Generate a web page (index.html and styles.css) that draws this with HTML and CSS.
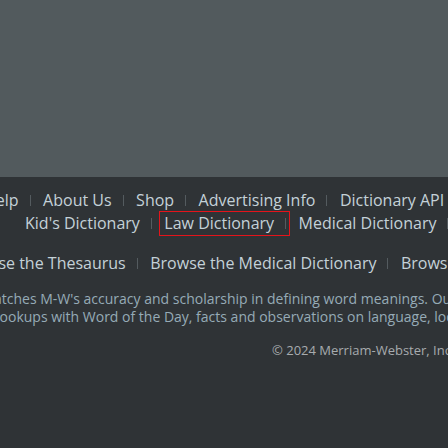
FILE: index.html
```html
<!DOCTYPE html>
<html lang="en">
<head>
<meta charset="utf-8">
<title>Footer</title>
<link rel="stylesheet" href="styles.css">
</head>
<body>
<div class="topband"></div>
<footer class="footer">
  <ul class="nav-row row-1">
    <li><a href="#">Help</a></li>
    <li><a href="#">About Us</a></li>
    <li><a href="#">Shop</a></li>
    <li><a href="#">Advertising Info</a></li>
    <li><a href="#">Dictionary API</a></li>
  </ul>
  <ul class="nav-row row-2">
    <li><a href="#">Kid's Dictionary</a></li>
    <li class="focused"><a href="#">Law Dictionary</a></li>
    <li><a href="#">Medical Dictionary</a></li>
    <li><a href="#">Privacy Policy</a></li>
  </ul>
  <ul class="nav-row row-3">
    <li><a href="#">Browse the Thesaurus</a></li>
    <li><a href="#">Browse the Medical Dictionary</a></li>
    <li><a href="#">Browse the Legal Dictionary</a></li>
  </ul>
  <p class="about">
    <span class="about-line line-1">matches M-W's accuracy and scholarship in defining word meanings. Our</span>
    <span class="about-line line-2">lookups with Word of the Day, facts and observations on language, lookup</span>
  </p>
  <p class="copyright">© 2024 Merriam-Webster, Incorporated</p>
</footer>
</body>
</html>
```

FILE: styles.css
```css
html, body {
  margin: 0;
  padding: 0;
}
body {
  width: 448px;
  height: 448px;
  overflow: hidden;
  background: #2f3336;
  font-family: "Open Sans", "Noto Sans", sans-serif;
}
.topband {
  height: 177px;
  background: #525a5d;
}
.footer {
  padding-top: 12px;
}
.nav-row {
  list-style: none;
  margin: 0;
  padding: 0;
  display: flex;
  gap: 5.5px;
  white-space: nowrap;
  font-size: 16px;
  line-height: 23px;
}
.nav-row li {
  display: flex;
  align-items: center;
  flex: none;
  padding: 0 3px 0 4px;
}
.nav-row li::after {
  content: "";
  display: block;
  width: 1px;
  height: 11px;
  margin-left: 11px;
  background: #545b5f;
}
.nav-row a {
  color: #c4d1d8;
  text-decoration: none;
}
.focused {
  outline: 1px solid #e4141b;
}
.row-1 {
  margin-left: -20px;
}
.row-2 {
  margin-left: 21px;
}
.row-3 {
  margin-top: 17px;
  margin-left: -44.5px;
}
.about {
  margin: 15px 0 0;
  font-size: 14px;
  line-height: 18px;
  color: #96abb6;
  white-space: nowrap;
}
.about-line {
  display: block;
}
.line-1 {
  margin-left: -19px;
}
.line-2 {
  margin-left: -4px;
}
.copyright {
  margin: 15px 0 0;
  padding-left: 272px;
  font-size: 13px;
  line-height: 18px;
  color: #a7abae;
  white-space: nowrap;
}
```
